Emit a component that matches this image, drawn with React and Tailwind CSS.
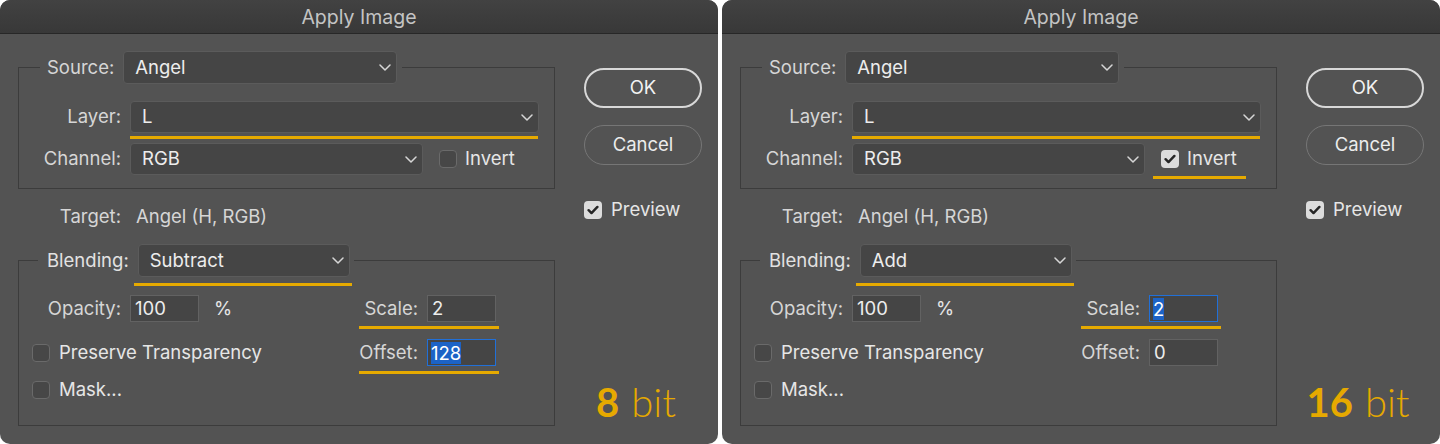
import React from 'react';

const ui = "font-['Inter','Liberation_Sans',sans-serif]";

function Chevron() {
  return (
    <svg width="12" height="7" viewBox="0 0 12 7" fill="none" className="shrink-0">
      <path d="M1 1l5 5 5-5" stroke="#d6d6d6" strokeWidth="1.5" strokeLinecap="round" strokeLinejoin="round" />
    </svg>
  );
}

function Select({ value, className = '' }) {
  return (
    <div className={`flex h-[32px] items-center justify-between rounded-[4px] border border-[#5b5b5b] bg-[#454545] pl-[11px] pr-[5px] text-[#ededed] ${className}`}>
      <span>{value}</span>
      <Chevron />
    </div>
  );
}

// yellow annotation underline
function Mark({ className = '' }) {
  return <div className={`absolute h-[3px] bg-[#e6aa00] ${className}`} />;
}

function Check({ checked }) {
  if (checked) {
    return (
      <div className="flex h-[18px] w-[18px] shrink-0 items-center justify-center rounded-[4px] bg-[#dcdcdc]">
        <svg width="12" height="10" viewBox="0 0 12 10" fill="none">
          <path d="M1.6 5.2l2.9 2.9L10.4 1.9" stroke="#262626" strokeWidth="2.4" strokeLinecap="round" strokeLinejoin="round" />
        </svg>
      </div>
    );
  }
  return <div className="h-[18px] w-[18px] shrink-0 rounded-[4px] border border-[#6a6a6a] bg-[#474747]" />;
}

function Field({ value, selected }) {
  return (
    <div className={`flex h-[27px] w-[69px] items-center bg-[#454545] text-[#ededed] ${selected ? 'border-[1.5px] border-[#2170d8] pl-[3px]' : 'border border-[#626262] pl-[4px]'}`}>
      <span className={selected ? 'bg-[#1c63c6] leading-[22px] text-white' : ''}>{value}</span>
    </div>
  );
}

function Dialog({ blending, invert, scaleSel, offset, offsetSel, bits, scaleMark, offsetMark }) {
  return (
    <div className={`flex h-[444px] w-[718px] shrink-0 flex-col overflow-hidden rounded-[10px] bg-[#535353] text-[18.5px] ${ui}`}>
      <div className="flex h-[34px] shrink-0 items-center justify-center border-b border-[#272727] bg-gradient-to-b from-[#424242] to-[#383838] pt-[2px] text-[19.5px] text-[#c4c4c4]">
        Apply Image
      </div>

      <div className="flex flex-1 pl-[18px] pt-[17px]">
        <div className="w-[537px]">
          {/* Source group */}
          <fieldset className="border border-[#3c3c3c] pb-[13px]">
            <legend className="ml-[21px] pl-[7px] pr-[5px]">
              <div className="flex items-center">
                <span className="text-[#d6d6d6]">Source:</span>
                <Select value="Angel" className="ml-[9px] h-[33px] w-[274px]" />
              </div>
            </legend>
            <div className="mt-[17px] flex items-center">
              <span className="w-[102px] text-right text-[#d6d6d6]">Layer:</span>
              <div className="relative ml-[9px] w-[409px]">
                <Select value="L" />
                <Mark className="left-0 top-[35px] w-[408px]" />
              </div>
            </div>
            <div className="mt-[10px] flex items-center">
              <span className="w-[102px] text-right text-[#d6d6d6]">Channel:</span>
              <Select value="RGB" className="ml-[9px] w-[293px]" />
              <div className="relative ml-[16px] flex h-[32px] items-center">
                <Check checked={invert} />
                <span className="ml-[8px] text-[#e6e6e6]">Invert</span>
                {invert && <Mark className="-left-[8px] top-[33px] w-[93px]" />}
              </div>
            </div>
          </fieldset>

          <div className="mt-[17px] flex h-[22px] items-center">
            <span className="w-[103px] text-right text-[#d6d6d6]">Target:</span>
            <span className="ml-[15px] text-[#d6d6d6]">Angel (H, RGB)</span>
          </div>

          {/* Blending group */}
          <fieldset className="mt-[16px] border border-[#3c3c3c] pb-[26px]">
            <legend className="ml-[19px] pl-[9px] pr-[4px]">
              <div className="flex items-center">
                <span className="text-[#e2e2e2]">Blending:</span>
                <div className="relative ml-[9px] w-[212px]">
                  <Select value={blending} className="h-[33px]" />
                  <Mark className="-left-[4px] top-[39px] w-[218px]" />
                </div>
              </div>
            </legend>

            <div className="mt-[18px] grid grid-cols-[1fr_auto] pr-[58px]">
              <div className="flex h-[27px] items-center">
                <span className="w-[102px] text-right text-[#d6d6d6]">Opacity:</span>
                <div className="ml-[9px]">
                  <Field value="100" />
                </div>
                <span className="ml-[15px] text-[#e6e6e6]">%</span>
              </div>
              <div className="relative flex h-[27px] items-center">
                <span className="w-[80px] text-right text-[#d6d6d6]">Scale:</span>
                <div className="ml-[9px]">
                  <Field value="2" selected={scaleSel} />
                </div>
                {scaleMark && <Mark className="left-[21px] top-[31px] w-[140px]" />}
              </div>

              <div className="mt-[17px] flex h-[27px] items-center pl-[13px]">
                <Check />
                <span className="ml-[9px] text-[#e6e6e6]">Preserve Transparency</span>
              </div>
              <div className="relative mt-[17px] flex h-[27px] items-center">
                <span className="w-[80px] text-right text-[#d6d6d6]">Offset:</span>
                <div className="ml-[9px]">
                  <Field value={offset} selected={offsetSel} />
                </div>
                {offsetMark && <Mark className="left-[21px] top-[32px] w-[140px]" />}
              </div>

              <div className="col-span-2 mt-[15px] flex h-[18px] items-center pl-[13px]">
                <Check />
                <span className="ml-[9px] text-[#e6e6e6]">Mask...</span>
              </div>
            </div>
          </fieldset>
        </div>

        <div className="ml-[29px] flex w-[118px] flex-col pt-[17px]">
          <div className="flex h-[40px] items-center justify-center rounded-full border-2 border-[#d8d8d8] text-[#f2f2f2]">OK</div>
          <div className="mt-[17px] flex h-[40px] items-center justify-center rounded-full border-[1.5px] border-[#767676] text-[#ececec]">Cancel</div>
          <div className="mt-[36px] flex h-[18px] items-center">
            <Check checked />
            <span className="ml-[9px] text-[#e6e6e6]">Preview</span>
          </div>
          <div className="mt-auto flex items-baseline justify-center pb-[22px] pr-[14px] font-['Lato',sans-serif] text-[40px] leading-none text-[#e6a900]">
            <span className="font-bold">{bits}</span>
            <span className="ml-[12px] font-light">bit</span>
          </div>
        </div>
      </div>
    </div>
  );
}

export default function App() {
  return (
    <div className="flex h-[444px] w-[1440px] gap-[4px] bg-white">
      <Dialog blending="Subtract" invert={false} offset="128" offsetSel bits="8" scaleMark offsetMark />
      <Dialog blending="Add" invert offset="0" scaleSel bits="16" scaleMark />
    </div>
  );
}
